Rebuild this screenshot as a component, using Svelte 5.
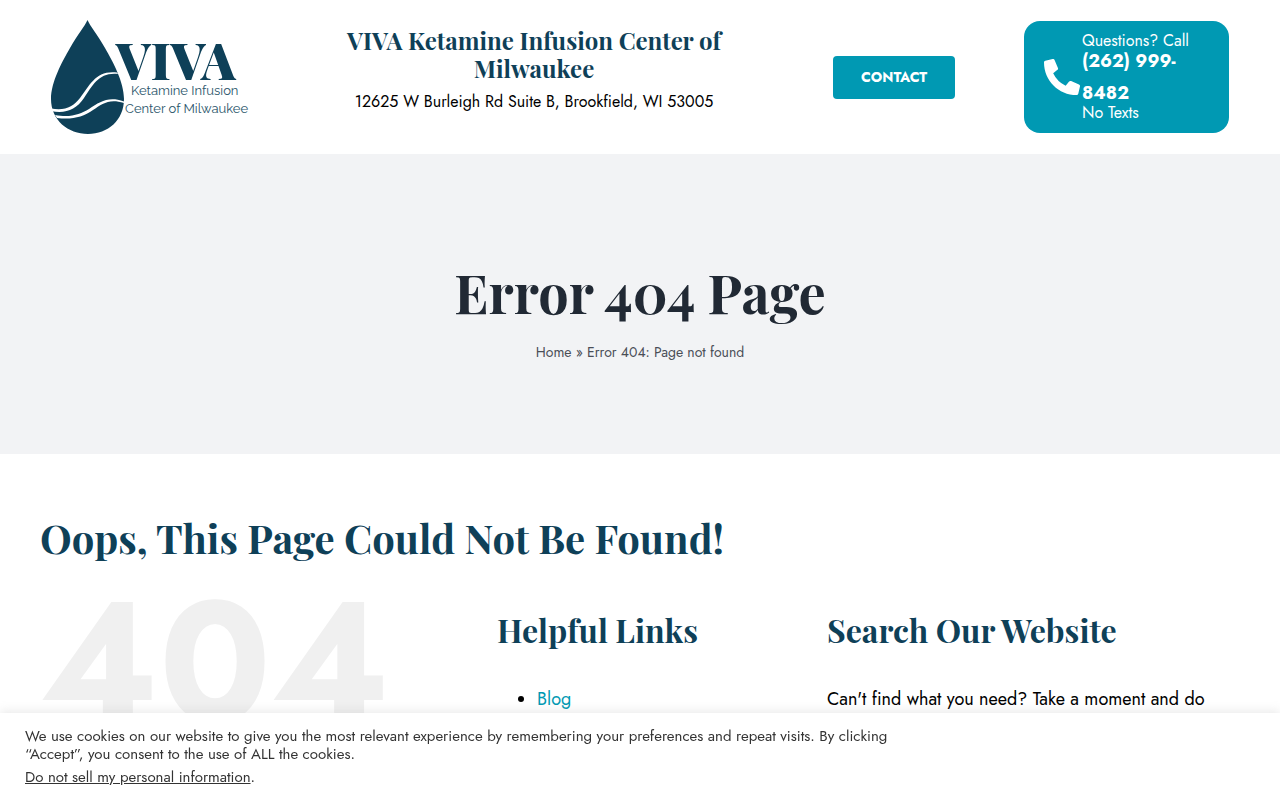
<script lang="ts">
  const practice = "VIVA Ketamine Infusion Center of Milwaukee";
  const address = "12625 W Burleigh Rd Suite B, Brookfield, WI 53005";

  const links = [{ label: "Blog", href: "#blog" }];
</script>

<header>
  <a class="logo" href="#home" aria-label="VIVA home">
    <svg width="204" height="114" viewBox="0 0 204 114">
      <path fill="#0e4058" d="M36.500 0C34 6 27 14 19 28C11 42 0 62 0 79C0 100 17 114 37 114C57 114 73 100 73 79C73 62 62 42 54 28C46 14 39 6 36.500 0Z" />
      <path fill="#fff" d="M0 88.500C14 91 22 87 29 78C39 65 45 50 66 52.500L67 54C48 52 42 65 33 78C25 90 14 94 0 91Z" />
      <path fill="#fff" d="M4 95C20 98 29 94 38 89C49 82 57 76 73 81.500L73 83C58 78 51 84 42 90C32 97 21 100 6 98Z" />
      <text class="logo-name" x="65" y="60">VIVA</text>
      <text class="logo-sub" x="80" y="75">Ketamine Infusion</text>
      <text class="logo-sub" x="74" y="93">Center of Milwaukee</text>
    </svg>
  </a>

  <div class="practice">
    <h2>{practice}</h2>
    <p>{address}</p>
  </div>

  <a class="contact" href="#contact">CONTACT</a>

  <a class="phone" href="tel:2629998482">
    <svg width="36" height="36" viewBox="0 0 512 512" aria-hidden="true">
      <path fill="#fff" d="M497.390 361.800l-112-48a24 24 0 0 0-28 6.900l-49.600 60.600A370.660 370.660 0 0 1 130.600 204.110l60.600-49.600a23.940 23.940 0 0 0 6.900-28l-48-112A24.160 24.160 0 0 0 122.600.610l-104 24A24 24 0 0 0 0 48c0 256.500 207.900 464 464 464a24 24 0 0 0 23.400-18.600l24-104a24.290 24.290 0 0 0-14.010-27.600z" />
    </svg>
    <span class="phone-text">
      <span>Questions? Call</span>
      <strong>(262) 999-8482</strong>
      <span>No Texts</span>
    </span>
  </a>
</header>

<section class="title-bar">
  <h1>Error 404 Page</h1>
  <nav><a href="#home">Home</a> » Error 404: Page not found</nav>
</section>

<main>
  <h2>Oops, This Page Could Not Be Found!</h2>
  <div class="columns">
    <div class="big">404</div>
    <div>
      <h3>Helpful Links</h3>
      <ul>
        {#each links as link}
          <li><a href={link.href}>{link.label}</a></li>
        {/each}
      </ul>
    </div>
    <div>
      <h3>Search Our Website</h3>
      <p>Can't find what you need? Take a moment and do</p>
    </div>
  </div>
</main>

<div class="cookies">
  <p>
    We use cookies on our website to give you the most relevant experience by remembering your preferences and repeat visits. By clicking “Accept”, you consent to the use of ALL the cookies.
  </p>
  <p><a href="#privacy">Do not sell my personal information</a>.</p>
</div>

<style>
  :global(body) {
    background: #fff;
    color: #000;
    font-family: Jost, Lato, "Open Sans", sans-serif;
    font-size: 18px;
  }

  h1, h2, h3, p, ul {
    margin: 0;
  }

  h1, h2, h3 {
    color: #0e4058;
    font-family: "Playfair Display", "Liberation Serif", serif;
    font-weight: 700;
  }

  header {
    display: grid;
    grid-template-columns: 253fr 460fr 260fr 205fr;
    align-items: center;
    padding: 20px 51px;
  }

  .logo, .logo svg {
    display: block;
  }

  .logo-name {
    fill: #0e4058;
    font: 900 50px "Playfair Display", "Liberation Serif", serif;
  }

  .logo-sub {
    fill: #2b566b;
    font: 13px Raleway, Lato, sans-serif;
  }

  .practice {
    padding: 0 36px;
    text-align: center;
  }

  .practice h2 {
    font-size: 24px;
    line-height: 28px;
  }

  .practice p {
    margin: 6px 0 12px;
    font-size: 16px;
    line-height: 28px;
    white-space: nowrap;
  }

  .contact {
    justify-self: center;
    padding: 12px 28px;
    border-radius: 4px;
    background: #0099b3;
    color: #fff;
    font-size: 14px;
    font-weight: 700;
    line-height: 19px;
    text-decoration: none;
  }

  .phone {
    display: flex;
    align-items: center;
    gap: 2px;
    padding: 10px 20px;
    border-radius: 16px;
    background: #0099b3;
    color: #fff;
    font-size: 16px;
    line-height: 20px;
    text-decoration: none;
  }

  .phone svg {
    flex: none;
  }

  .phone-text > * {
    display: block;
  }

  .phone strong {
    margin: -6px 0;
    font-size: 18px;
    font-weight: 700;
    line-height: 32px;
  }

  .title-bar {
    display: flex;
    flex-direction: column;
    justify-content: center;
    align-items: center;
    gap: 10px;
    min-height: 300px;
    background: #f2f3f5;
    color: #4a4e57;
    font-size: 14px;
    line-height: 24px;
  }

  .title-bar h1 {
    padding-top: 10px;
    color: #212934;
    font-size: 54px;
    line-height: 76px;
  }

  .title-bar a {
    color: inherit;
    text-decoration: none;
  }

  main {
    padding: 56px 40px 0;
  }

  main h2 {
    font-size: 40px;
    line-height: 56px;
  }

  .columns {
    display: grid;
    grid-template-columns: 457fr 330fr 413fr;
    margin-top: 24px;
  }

  .big {
    color: #f0f0f0;
    font-size: 170px;
    font-weight: 700;
    line-height: 144px;
  }

  h3 {
    margin-top: 18px;
    font-size: 32px;
    line-height: 44px;
  }

  ul, .columns p {
    margin-top: 31px;
    line-height: 32px;
    white-space: nowrap;
  }

  li a {
    color: #0099b3;
    text-decoration: none;
  }

  .cookies {
    position: fixed;
    right: 0;
    bottom: 0;
    left: 0;
    box-sizing: border-box;
    padding: 14px 25px;
    background: #fff;
    box-shadow: 0 -1px 10px rgba(172, 171, 171, 0.3);
    color: #333;
    font-size: 15px;
    line-height: 18px;
  }

  .cookies p {
    max-width: 880px;
  }

  .cookies p + p {
    margin-top: 5px;
  }

  .cookies a {
    color: inherit;
  }
</style>
